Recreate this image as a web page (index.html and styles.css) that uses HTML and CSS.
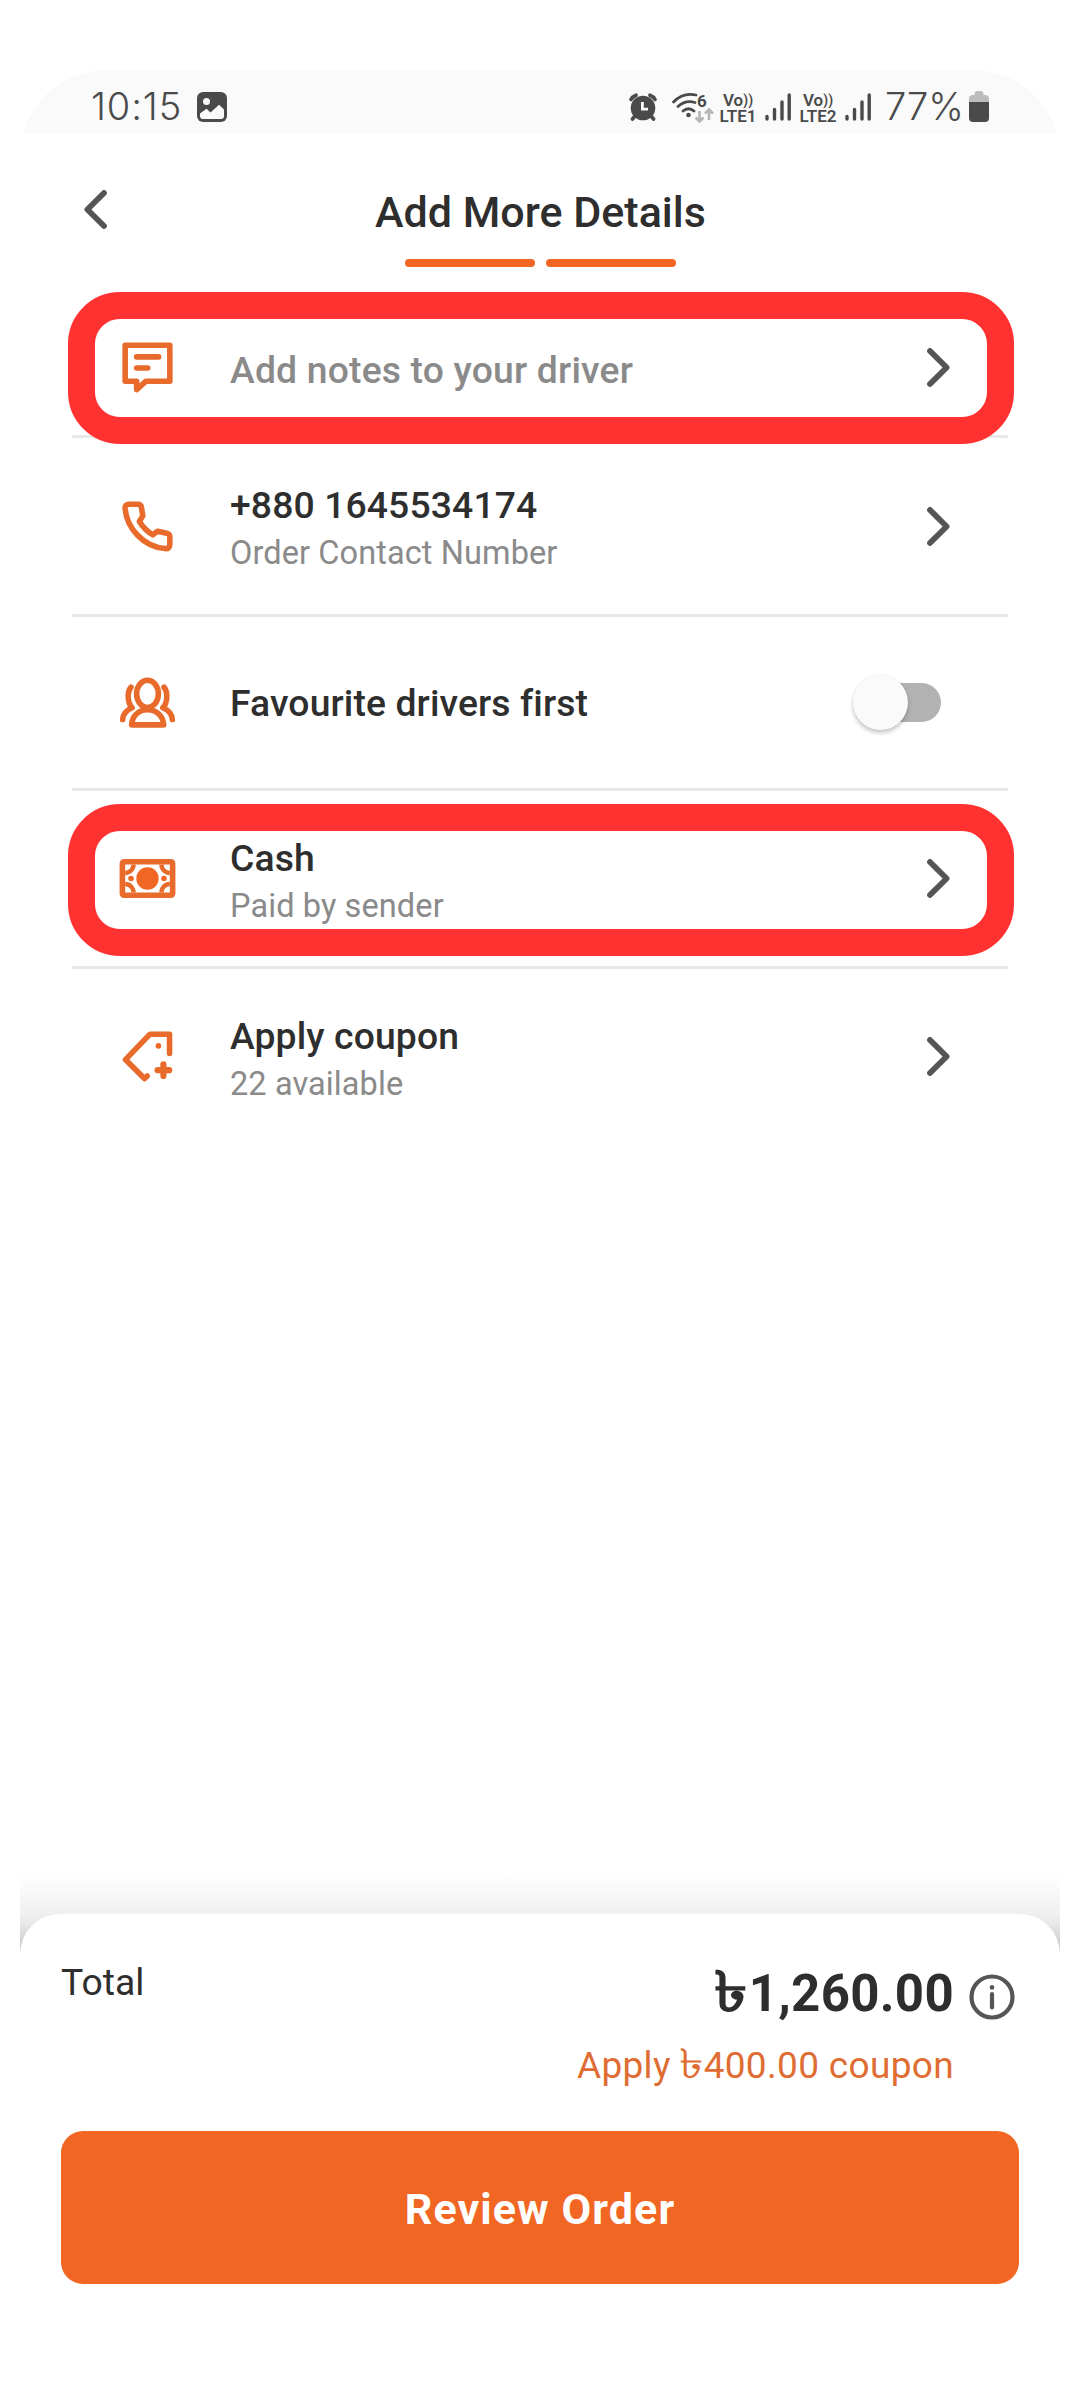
FILE: index.html
```html
<!DOCTYPE html>
<html lang="en">
<head>
<meta charset="utf-8">
<title>Add More Details</title>
<link rel="stylesheet" href="styles.css">
</head>
<body>
<svg class="defs" aria-hidden="true">
  <symbol id="chevron" viewBox="0 0 23 39"><path d="M3 3L19.6 19.5L3 36" fill="none" stroke="#555" stroke-width="5.8" stroke-linecap="round" stroke-linejoin="round"/></symbol>
  <symbol id="signal" viewBox="0 0 26 28"><path d="M2 23.5V26M9.500 16.500V26M17 9V26M24.200 2V26" fill="none" stroke="#4a4a4a" stroke-width="3.400" stroke-linecap="round"/></symbol>
</svg>
<main class="phone">
  <div class="status">
    <span class="clock">10:15</span>
    <svg class="ic-image" viewBox="0 0 30 30"><rect width="30" height="30" rx="6" fill="#4a4a4a"/><circle cx="9.500" cy="9.600" r="3.500" fill="#fafafa"/><path d="M3 21.500L9.500 16.700L13.500 20.500L22 12.700L27 17.500V24Q27 27 24 27H6Q3 27 3 24Z" fill="#fafafa"/></svg>
    <svg class="ic-alarm" viewBox="0 0 28 28"><g fill="none" stroke="#4a4a4a" stroke-width="3.600" stroke-linecap="round"><path d="M2 6.500Q3.500 3.500 7 2.200M26 6.500Q24.500 3.500 21 2.200M6 23L3.500 26M22 23L24.500 26"/></g><circle cx="14" cy="15" r="12.300" fill="#4a4a4a"/><path d="M13.400 9V16.200H19" fill="none" stroke="#fafafa" stroke-width="2.800"/></svg>
    <svg class="ic-wifi" viewBox="0 0 42 31"><g fill="none" stroke="#4a4a4a" stroke-width="2.800" stroke-linecap="round"><path d="M1.500 10Q11 0 24 3M6 14.500Q13.500 7.500 23 10.500M11 19Q16.500 14.500 22 19"/></g><circle cx="16.500" cy="23" r="2.300" fill="#4a4a4a"/><text x="25" y="14.500" class="wifi-gen">6</text><path d="M27.500 19V28.500M23.500 25.500L27.500 29.500L31.500 25.500M37 28V18M33 21.500L37 17.500L41 21.500" fill="none" stroke="#b5b5b5" stroke-width="2.600"/></svg>
    <span class="volte"><span>Vo<small>))</small></span><span>LTE1</span></span>
    <svg class="ic-signal s1"><use href="#signal"/></svg>
    <span class="volte v2"><span>Vo<small>))</small></span><span>LTE2</span></span>
    <svg class="ic-signal s2"><use href="#signal"/></svg>
    <span class="percent">77%</span>
    <svg class="ic-battery" viewBox="0 0 20 31"><path d="M5.500 3Q5.500 0 8.500 0H11.500Q14.500 0 14.500 3V4H16Q20 4 20 8V11H0V8Q0 4 4 4H5.500Z" fill="#bcbcbc"/><path d="M0 11H20V27Q20 31 16 31H4Q0 31 0 27Z" fill="#4a4a4a"/></svg>
  </div>

  <header class="header">
    <svg class="chev back"><use href="#chevron"/></svg>
    <h1>Add More Details</h1>
    <div class="steps"><i></i><i></i></div>
  </header>

  <section class="list">
    <div class="row first marked">
      <svg class="icon" viewBox="0 0 24 24"><path d="M4 4H20V16.900H11.500L8.100 19.900V16.900H4Z"/><path d="M8.100 8.200H16M8.100 12.200H12.100"/></svg>
      <div class="text"><div class="title muted">Add notes to your driver</div></div>
      <svg class="chev"><use href="#chevron"/></svg>
    </div>
    <div class="row">
      <svg class="icon" viewBox="0 0 24 24"><path d="M5.400 4H8.600Q9.600 4 9.800 5L10.300 8.200L9.100 10.200Q10.900 13.200 13.900 15L15.600 13.700L18.900 14.400Q20 14.700 20 15.700V18.400Q20 20.100 18.300 19.900C10.500 19.300 4.600 12.500 4 5.700Q3.900 4 5.400 4Z"/></svg>
      <div class="text"><div class="title">+880 1645534174</div><div class="sub">Order Contact Number</div></div>
      <svg class="chev"><use href="#chevron"/></svg>
    </div>
    <div class="row toggle-row">
      <svg class="icon" viewBox="0 0 24 24"><ellipse cx="12" cy="8.900" rx="3.900" ry="4.900"/><path d="M6.300 20C6.500 16.800 8.800 14.600 12 14.600S17.600 16.800 17.800 20Z"/><path d="M6.100 6.500C4.600 8.300 4.800 12.200 6.500 13.900C4.400 14.800 3.200 16.200 3.100 18.100M17.900 6.500C19.400 8.300 19.200 12.200 17.500 13.900C19.600 14.800 20.800 16.200 20.900 18.100"/></svg>
      <div class="text"><div class="title">Favourite drivers first</div></div>
      <div class="switch"><div class="thumb"></div></div>
    </div>
    <div class="row marked">
      <svg class="icon" viewBox="0 0 24 24"><rect x="3" y="6" width="18" height="12" rx=".6"/><path d="M7 7A3 3 0 0 1 4 10M17 7A3 3 0 0 0 20 10M4 14A3 3 0 0 1 7 17M20 14A3 3 0 0 0 17 17" stroke-linecap="butt" stroke-width="1.600"/><g class="solid"><circle cx="12" cy="12" r="4"/><circle cx="6.100" cy="12" r="1"/><circle cx="17.900" cy="12" r="1"/></g></svg>
      <div class="text"><div class="title">Cash</div><div class="sub">Paid by sender</div></div>
      <svg class="chev"><use href="#chevron"/></svg>
    </div>
    <div class="row last">
      <svg class="icon" viewBox="0 0 24 24"><path d="M19.900 10.900V4H12.900L4.100 13.100L10.900 19.900L11.900 19"/><path d="M17.700 14.800V19M15.600 16.900H19.800" stroke-width="2.200"/><circle class="solid" cx="15.900" cy="8.200" r="1"/></svg>
      <div class="text"><div class="title">Apply coupon</div><div class="sub">22 available</div></div>
      <svg class="chev"><use href="#chevron"/></svg>
    </div>
  </section>

  <footer class="footer">
    <div class="sheet">
      <div class="summary">
        <span class="total">Total</span>
        <div class="amounts">
          <div class="price"><span class="taka">৳</span>1,260.00</div>
          <div class="coupon">Apply <span class="taka">৳</span>400.00 coupon</div>
        </div>
        <svg class="info" viewBox="0 0 46 46"><circle cx="23" cy="23" r="20.500" fill="none" stroke="#555" stroke-width="4.200"/><circle cx="23" cy="13.400" r="2.300" fill="#555"/><path d="M23 20V33.500" stroke="#555" stroke-width="4.200" stroke-linecap="round"/></svg>
      </div>
      <button class="cta">Review Order</button>
    </div>
  </footer>
</main>
</body>
</html>
```
FILE: styles.css
```css
*, *::before, *::after { box-sizing: border-box; }
body {
  margin: 0;
  padding-top: 70px;
  height: 2400px;
  background: #fff;
  font-family: Roboto, "Noto Sans", sans-serif;
  color: #2e2e2e;
}
.defs { position: absolute; width: 0; height: 0; }
.phone {
  width: 1040px;
  height: 2330px;
  margin: 0 auto;
  display: flex;
  flex-direction: column;
  border-radius: 86px 86px 0 0;
  overflow: hidden;
}

/* status bar */
.status {
  height: 64px;
  flex: none;
  display: flex;
  align-items: flex-start;
  padding: 21px 71px 0 71px;
  background: #fafafa;
  color: #4a4a4a;
}
.clock, .percent {
  font-family: Inter, Roboto, sans-serif;
  font-weight: 350;
  font-size: 38px;
  line-height: 30px;
  white-space: nowrap;
}
.clock { width: 106px; letter-spacing: .9px; }
.percent { width: 84px; margin-left: 14px; letter-spacing: 0; }
.ic-image { width: 30px; height: 30px; margin-top: 1px; }
.ic-alarm { width: 28px; height: 28px; margin: 2px 0 0 auto; }
.ic-wifi { width: 42px; height: 31px; margin: 1px 0 0 15px; overflow: visible; }
.wifi-gen { font: 700 17px Roboto, sans-serif; fill: #4a4a4a; }
.volte {
  width: 38px;
  margin: 1px 0 0 5px;
  display: flex;
  flex-direction: column;
  align-items: center;
  font-weight: 600;
  font-size: 17px;
  line-height: 16px;
  white-space: nowrap;
}
.volte > span { height: 16px; }
.volte small { font-size: 14px; line-height: 1; vertical-align: 1px; }
.volte.v2 { margin-left: 8px; }
.ic-signal { width: 26px; height: 28px; margin: 2px 0 0 8px; }
.ic-battery { width: 20px; height: 31px; }

/* header */
.header {
  height: 166px;
  flex: none;
  display: grid;
  grid-template-columns: 110px 1fr 110px;
  grid-template-rows: 125px 8px;
}
.chev { width: 23px; height: 39px; flex: none; }
.back { transform: scaleX(-1); margin: 56px 0 0 64px; }
h1 {
  margin: 52px 0 0 1px;
  font-weight: 500;
  font-size: 43px;
  line-height: 52px;
  text-align: center;
}
.steps { grid-column: 2; display: flex; justify-content: center; gap: 11px; }
.steps i { width: 130px; height: 8px; border-radius: 4px; background: #f16623; }

/* option rows */
.list { width: 936px; margin: 0 auto; }
.row {
  position: relative;
  height: 178px;
  display: flex;
  align-items: center;
  padding: 0 58px 0 42px;
  border-bottom: 3px solid #e8e8e8;
}
.row.first { height: 138px; }
.row:nth-child(2) { height: 179px; }
.row.toggle-row { height: 174px; padding-right: 67px; }
.row.last { border-color: transparent; }
.row.marked::after {
  content: "";
  position: absolute;
  z-index: 1;
  left: -4px;
  top: 13px;
  width: 946px;
  height: 152px;
  border: 27px solid #ff3131;
  border-radius: 52px;
}
.row.first.marked::after { top: -8px; }
.icon {
  width: 67px;
  height: 67px;
  flex: none;
  fill: none;
  stroke: #e96b2b;
  stroke-width: 2;
  stroke-linecap: round;
  stroke-linejoin: round;
}
.icon .solid { fill: #f16623; stroke: none; }
.text { flex: 1; margin-left: 49px; padding-top: 4px; white-space: nowrap; }
.toggle-row .text { padding-top: 2px; }
.first .text { padding-top: 5px; }
.title { font-weight: 500; font-size: 37.3px; line-height: 49px; letter-spacing: .12px; }
.sub { font-size: 32.500px; line-height: 44px; padding-top: 1px; letter-spacing: .1px; color: #8a8a8a; }
.muted { color: #8a8a8a; letter-spacing: .18px; }
.switch {
  width: 80px;
  height: 39px;
  border-radius: 20px;
  background: #b2b2b2;
  display: flex;
  align-items: center;
}
.thumb {
  width: 55px;
  height: 55px;
  flex: none;
  margin-left: -8px;
  border-radius: 50%;
  background: #fafafa;
  box-shadow: 0 3px 4px rgba(0, 0, 0, .22), 0 0 2px rgba(0, 0, 0, .08);
}

/* bottom sheet */
.footer {
  margin-top: auto;
  height: 526px;
  flex: none;
  padding-top: 40px;
  background: linear-gradient(#fff 0, #f0f0f0 39px, #e8e8e8 50px, #c4c4c4 76px, #fff 80px);
}
.sheet {
  height: 486px;
  padding: 46px 41px 0;
  border-radius: 40px 40px 0 0;
  background: #fff;
}
.summary { height: 171px; display: flex; padding: 0 4px 0 0; }
.total { font-size: 37.3px; line-height: 44px; }
.amounts { margin-left: auto; text-align: right; white-space: nowrap; }
.price { font-weight: 700; font-size: 51px; line-height: 68px; height: 68px; letter-spacing: .3px; }
.coupon { font-size: 37px; line-height: 44px; height: 44px; margin-top: 16px; letter-spacing: .33px; color: #df6d33; }
.taka {
  display: inline-block;
  font-size: 1.1em;
  line-height: 1;
  transform: scaleX(1.2);
  transform-origin: right;
}
.coupon .taka { margin-left: 3px; }
.info { width: 46px; height: 46px; margin: 14px 0 0 15px; }
.cta {
  display: block;
  width: 958px;
  height: 153px;
  padding: 2px 0 0;
  border: 0;
  border-radius: 22px;
  background: #f16623;
  color: #fff;
  font: 700 43px Roboto, sans-serif;
  letter-spacing: 1.1px;
}
```
